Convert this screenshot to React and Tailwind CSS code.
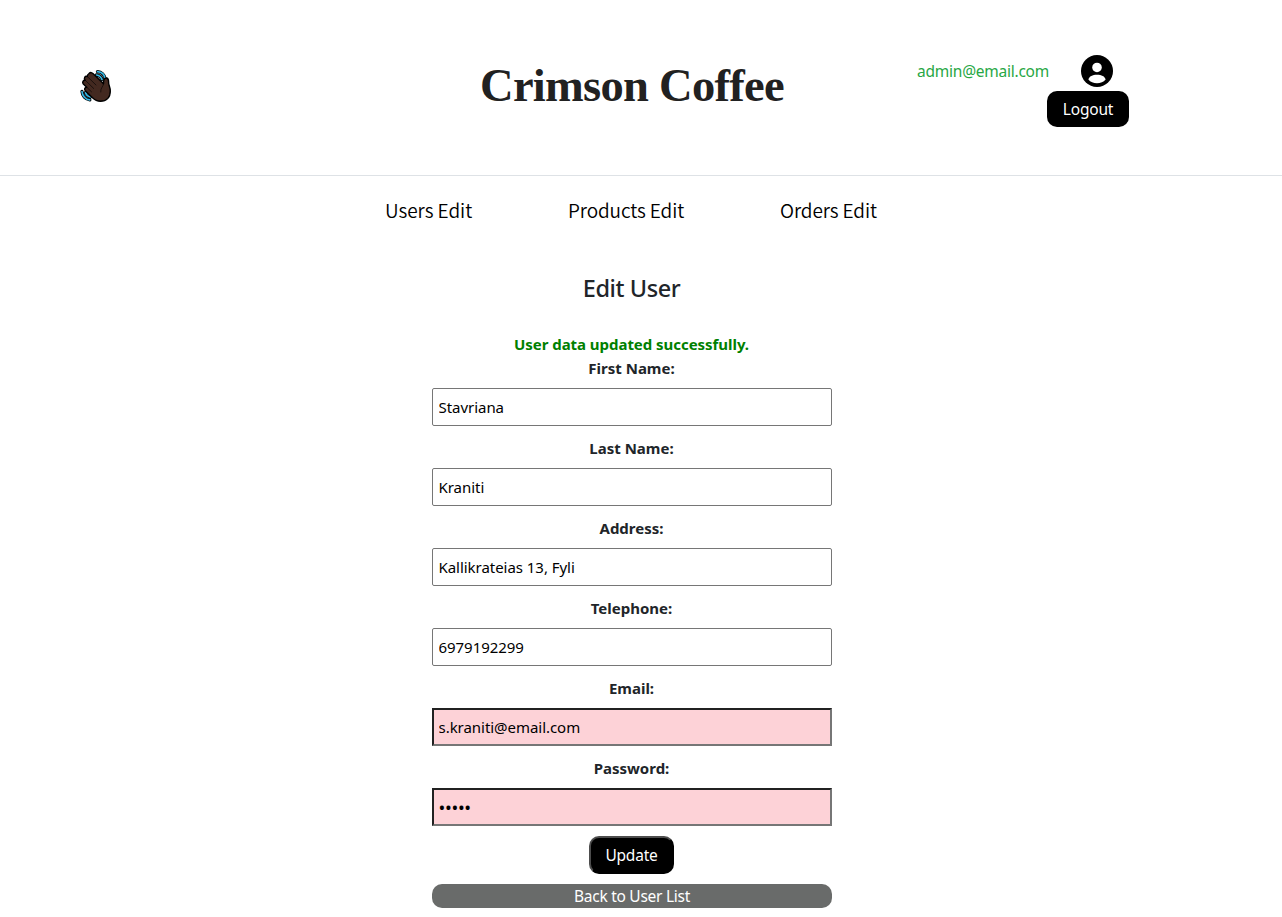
import React, { useState } from "react";

const fields = [
  { label: "First Name:", value: "Stavriana", type: "text" },
  { label: "Last Name:", value: "Kraniti", type: "text" },
  { label: "Address:", value: "Kallikrateias 13, Fyli", type: "text" },
  { label: "Telephone:", value: "6979192299", type: "text" },
  { label: "Email:", value: "s.kraniti@email.com", type: "email" },
  { label: "Password:", value: "abcde", type: "password" },
];

function WavingHand() {
  return (
    <svg viewBox="0 0 32 32" className="h-8 w-8" aria-label="Waving hand">
      <g fill="none" strokeLinecap="round" strokeLinejoin="round">
        <path d="M17.500 1.700C21.500 2 24.600 5 25.300 9M16.500 5C19.500 5.500 21.300 7.200 22 9.500M2 21.500C2.300 26 5.500 29.500 9.800 29.800M5.500 22.500C6.200 25 7.600 26.300 10.200 27" stroke="#000" strokeWidth="3.300" />
        <path d="M17.500 1.700C21.500 2 24.600 5 25.300 9M16.500 5C19.500 5.500 21.300 7.200 22 9.500M2 21.500C2.300 26 5.500 29.500 9.800 29.800M5.500 22.500C6.200 25 7.600 26.300 10.200 27" stroke="#35b9e6" strokeWidth="1.700" />
      </g>
      <path d="M9 3.500C10.500 2 12 2.500 13.200 3.700L23.500 13.700C23.300 9.500 24.500 7.500 26.800 8C29 8.600 28.500 11 28.700 13.500C29 16 30.300 17.500 30.300 21C30.300 27.500 26.500 31.200 20.500 31.200C17 31.200 14.500 29.800 12.500 27.800L5.300 20.800C3.800 19.200 5 17.200 6.700 17.300L3.300 14C1.800 12.200 3.300 10 5.200 10.300C3.300 8.300 5 5.700 7.300 6.500C7.200 5.300 7.800 4.300 9 3.500Z" fill="#432920" stroke="#000" strokeWidth="1.400" strokeLinejoin="round" />
      <path d="M7.500 6.700L16 15M5.500 10.500L13.700 18.500M6.500 17L11.500 21.800M23.500 13.700C23.600 16.500 20.200 18 20.700 22" fill="none" stroke="#000" strokeWidth="0.600" strokeLinecap="round" />
    </svg>
  );
}

function UserCircle() {
  return (
    <svg viewBox="2 2 20 20" className="block h-8 w-8">
      <circle cx="12" cy="12" r="10" fill="#000" />
      <circle cx="12" cy="9.800" r="3" fill="#fff" />
      <path d="M6.600 17.300C7.100 15.300 9.200 14.300 12 14.300S16.900 15.300 17.400 17.300C16.100 18.900 14.200 19.600 12 19.600S7.900 18.900 6.600 17.300Z" fill="#fff" />
    </svg>
  );
}

function Field({ label, value, type }) {
  const [text, setText] = useState(value);
  const look =
    type === "text"
      ? "rounded-[2px] border border-[#767676] bg-white pl-[5.5px]"
      : "border-2 border-t-[#212121] border-l-[#212121] border-r-[#767676] border-b-[#767676] bg-[#fdd2d7] pl-[4.5px]";
  const size =
    type === "password" ? "text-[18px] tracking-[-0.3px]" : "text-[15px] tracking-[-0.04px]";
  return (
    <label className="flex h-20 flex-col items-center">
      <span className="mr-px h-6 text-[15px] leading-6 font-bold">{label}</span>
      <input
        type={type}
        value={text}
        onChange={(e) => setText(e.target.value)}
        className={"mt-2 h-[38px] w-full text-black outline-none " + look + " " + size}
      />
    </label>
  );
}

export default function App() {
  return (
    <div className="h-[917px] w-full overflow-hidden bg-white font-['Noto_Sans','Open_Sans',sans-serif] text-[#212529]">
      <header className="grid h-44 grid-cols-[480px_304px_1fr] border-b border-[#dee2e6]">
        <div className="pt-[70px] pl-20">
          <WavingHand />
        </div>
        <h1 className="pt-[58px] text-center font-['Liberation_Serif',serif] text-[46.5px] leading-[56px] font-bold tracking-[-0.7px] whitespace-nowrap text-[#212121]">
          Crimson Coffee
        </h1>
        <div className="flex w-[345px] flex-col items-end pt-[55px]">
          <div className="flex items-center gap-8 pr-4">
            <span className="text-[15.5px] leading-6 tracking-[-0.25px] text-[#28a745]">admin@email.com</span>
            <UserCircle />
          </div>
          <button className="mt-1 h-9 w-[82px] rounded-[10px] bg-black pt-0.5 text-[15.5px] tracking-[-0.2px] text-white">Logout</button>
        </div>
      </header>
      <nav className="flex h-[70px] items-center gap-24 pb-0.5 pl-[385px] font-['Noto_Sans_CJK_SC',sans-serif] text-[19px] leading-7 font-[350] text-black">
        <a className="w-[87px] tracking-[-0.05px] whitespace-nowrap">Users Edit</a>
        <a className="w-[116px] tracking-[-0.1px] whitespace-nowrap">Products Edit</a>
        <a className="w-[97px] tracking-[-0.1px] whitespace-nowrap">Orders Edit</a>
      </nav>
      <main className="ml-[432px] flex w-[400px] flex-col items-center pt-[26px]">
        <h2 className="mr-px h-8 text-[23.5px] leading-8 font-medium tracking-[-0.42px]">Edit User</h2>
        <p className="mt-7 mr-px h-6 text-[15px] leading-6 font-bold tracking-[-0.04px] text-[#008000]">User data updated successfully.</p>
        <form className="w-full">
          {fields.map((f) => (
            <Field key={f.label} {...f} />
          ))}
        </form>
        <button className="mr-px h-[38px] w-[85px] rounded-[10px] border-2 border-black border-t-[#4d4d4d] border-l-[#4d4d4d] bg-black pt-0.5 text-[15.5px] tracking-[-0.2px] text-white">
          Update
        </button>
        <a className="mt-[10px] h-6 w-full rounded-[10px] bg-[#696b6a] text-center text-[15.5px] leading-6 tracking-[-0.27px] text-white">
          Back to User List
        </a>
      </main>
    </div>
  );
}
